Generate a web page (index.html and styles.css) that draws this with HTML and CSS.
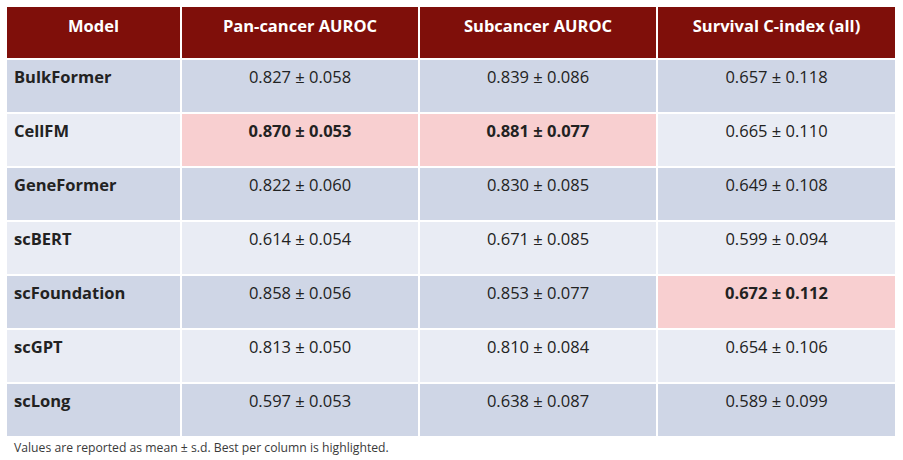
FILE: index.html
```html
<!DOCTYPE html>
<html lang="en">
<head>
<meta charset="utf-8">
<title>Model comparison</title>
<link rel="stylesheet" href="styles.css">
</head>
<body>
<div class="page">
  <div class="table">
    <div class="cell head">Model</div>
    <div class="cell head">Pan-cancer AUROC</div>
    <div class="cell head">Subcancer AUROC</div>
    <div class="cell head">Survival C-index (all)</div>

    <div class="cell name dark">BulkFormer</div>
    <div class="cell dark">0.827 ± 0.058</div>
    <div class="cell dark">0.839 ± 0.086</div>
    <div class="cell dark">0.657 ± 0.118</div>

    <div class="cell name light">CellFM</div>
    <div class="cell best">0.870 ± 0.053</div>
    <div class="cell best">0.881 ± 0.077</div>
    <div class="cell light">0.665 ± 0.110</div>

    <div class="cell name dark">GeneFormer</div>
    <div class="cell dark">0.822 ± 0.060</div>
    <div class="cell dark">0.830 ± 0.085</div>
    <div class="cell dark">0.649 ± 0.108</div>

    <div class="cell name light">scBERT</div>
    <div class="cell light">0.614 ± 0.054</div>
    <div class="cell light">0.671 ± 0.085</div>
    <div class="cell light">0.599 ± 0.094</div>

    <div class="cell name dark">scFoundation</div>
    <div class="cell dark">0.858 ± 0.056</div>
    <div class="cell dark">0.853 ± 0.077</div>
    <div class="cell best">0.672 ± 0.112</div>

    <div class="cell name light">scGPT</div>
    <div class="cell light">0.813 ± 0.050</div>
    <div class="cell light">0.810 ± 0.084</div>
    <div class="cell light">0.654 ± 0.106</div>

    <div class="cell name dark">scLong</div>
    <div class="cell dark">0.597 ± 0.053</div>
    <div class="cell dark">0.638 ± 0.087</div>
    <div class="cell dark">0.589 ± 0.099</div>
  </div>
  <p class="note">Values are reported as mean ± s.d. Best per column is highlighted.</p>
</div>
</body>
</html>
```

FILE: styles.css
```css
html, body {
  margin: 0;
  padding: 0;
  background: #ffffff;
}

.page {
  padding: 7px 0 0 7px;
  font-family: "Open Sans", "Liberation Sans", sans-serif;
  color: #222222;
}

.table {
  display: grid;
  width: 888px;
  grid-template-columns: 173px 236px 236px 237px;
  grid-template-rows: 51px repeat(7, 52px);
  gap: 2px;
}

.cell {
  font-size: 16.5px;
  line-height: 22px;
  padding: 6px 7px 0;
  text-align: center;
  white-space: nowrap;
}

.head {
  background: #7f0f0a;
  color: #ffffff;
  font-weight: 700;
  padding-top: 8px;
}

.name {
  text-align: left;
  font-weight: 700;
}

.dark {
  background: #cfd6e6;
}

.light {
  background: #e9ecf4;
}

.best {
  background: #f8cfd0;
  font-weight: 700;
}

.note {
  margin: 3px 0 0 7px;
  font-size: 12.2px;
  line-height: 17px;
  color: #3a3a3a;
}
```
